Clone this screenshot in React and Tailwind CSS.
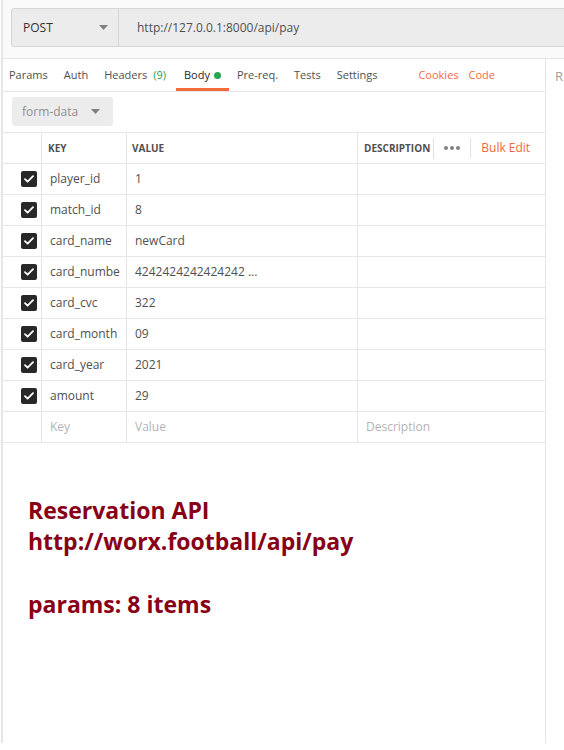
import React from 'react';

const rows = [
  { key: 'player_id', value: '1' },
  { key: 'match_id', value: '8' },
  { key: 'card_name', value: 'newCard' },
  { key: 'card_numbe', value: '4242424242424242 ...' },
  { key: 'card_cvc', value: '322' },
  { key: 'card_month', value: '09' },
  { key: 'card_year', value: '2021' },
  { key: 'amount', value: '29' },
];

const tabs = ['Params', 'Auth', 'Headers', 'Body', 'Pre-req.', 'Tests', 'Settings'];

function Caret({ className = '' }) {
  return (
    <svg width="9" height="5" viewBox="0 0 9 5" className={className}>
      <path d="M0 0h9L4.5 5z" fill="currentColor" />
    </svg>
  );
}

function Check() {
  return (
    <span className="w-4 h-4 rounded-[2px] bg-[#282828] flex items-center justify-center">
      <svg width="10" height="8" viewBox="0 0 10 8">
        <path d="M1 4.2l2.6 2.5L9 1.2" stroke="#fff" strokeWidth="1.8" fill="none" strokeLinecap="round" strokeLinejoin="round" />
      </svg>
    </span>
  );
}

export default function App() {
  return (
    <div className="w-[564px] h-[750px] bg-white overflow-hidden" style={{ fontFamily: '"Open Sans", sans-serif' }}>
      <div className="h-[743px] ml-[1px] border-l-2 border-[#e6e6e6] flex flex-col">
        {/* URL bar */}
        <div className="h-[59px] border-b border-[#e6e6e6] bg-[#fafafa] pt-[8px] pl-[8px] shrink-0">
          <div className="h-[39px] flex bg-[#ececec] border border-[#d6d6d6] rounded-l-[3px] -mr-[10px]">
            <div className="w-[107px] flex items-center justify-between pl-[11px] pr-[10px] border-r border-[#d6d6d6] text-[12px] text-[#333]">
              <span>POST</span>
              <Caret className="text-[#808080]" />
            </div>
            <div className="flex items-center pl-[18px] text-[12px] text-[#505050]">http://127.0.0.1:8000/api/pay</div>
          </div>
        </div>

        <div className="flex flex-1">
          {/* request pane */}
          <div className="w-[543px] border-r border-[#e6e6e6] flex flex-col">
            <div className="h-[33px] border-b border-[#e6e6e6] flex items-stretch -ml-[2px] text-[11px] text-[#505050]">
              {tabs.map((t) => (
                <div
                  key={t}
                  className={`px-2 pt-[3px] flex items-center border-b-[3px] ${t === 'Body' ? 'border-[#f26b3a] text-[#282828]' : 'border-transparent'}`}
                >
                  {t}
                  {t === 'Headers' && <span className="ml-[6px] mr-[2px] text-[#26a552]">(9)</span>}
                  {t === 'Body' && <span className="ml-[4px] w-[7px] h-[7px] rounded-full bg-[#26a552]"></span>}
                </div>
              ))}
              <div className="ml-auto flex items-center gap-[10px] pr-[50px] pt-[3px] text-[#f26b3a] pb-[3px]">
                <span>Cookies</span>
                <span>Code</span>
              </div>
            </div>

            <div className="pt-[5px] pl-[9px] pb-[6px]">
              <div className="w-[101px] h-[29px] bg-[#ececec] rounded-[3px] flex items-center pl-[10px] gap-[13px] text-[12px] text-[#909090]">
                form-data
                <Caret className="text-[#808080]" />
              </div>
            </div>

            <div className="border-t border-[#e6e6e6] text-[12px]">
              <div className="grid grid-cols-[39px_85px_231px_1fr] h-[31px] border-b border-[#e6e6e6]">
                <div className="border-r border-[#e6e6e6]"></div>
                <div className="border-r border-[#e6e6e6] flex items-center pl-[6px] text-[10px] font-bold text-[#505050]">KEY</div>
                <div className="border-r border-[#e6e6e6] flex items-center pl-[5px] text-[10px] font-bold text-[#505050]">VALUE</div>
                <div className="flex items-center pl-[6px] text-[10px] font-bold text-[#505050]">
                  <span className="pr-[3px]">DESCRIPTION</span>
                  <span className="h-[21px] border-l border-[#e0e0e0] flex items-center px-[10px]">
                    <span className="flex gap-[2px]">
                      <span className="w-[4px] h-[4px] rounded-full bg-[#808080]"></span>
                      <span className="w-[4px] h-[4px] rounded-full bg-[#808080]"></span>
                      <span className="w-[4px] h-[4px] rounded-full bg-[#808080]"></span>
                    </span>
                  </span>
                  <span className="h-[20px] border-l border-[#e0e0e0] flex items-center pl-[10px] text-[12px] font-normal text-[#f26b3a]">Bulk Edit</span>
                </div>
              </div>
              {rows.map((r) => (
                <div key={r.key} className="grid grid-cols-[39px_85px_231px_1fr] h-[31px] border-b border-[#e6e6e6] text-[#505050]">
                  <div className="border-r border-[#e6e6e6] flex items-center justify-end pr-[4px]">
                    <Check />
                  </div>
                  <div className="border-r border-[#e6e6e6] flex items-center pl-[8px] overflow-hidden whitespace-nowrap">{r.key}</div>
                  <div className="border-r border-[#e6e6e6] flex items-center pl-[8px]">{r.value}</div>
                  <div></div>
                </div>
              ))}
              <div className="grid grid-cols-[39px_85px_231px_1fr] h-[31px] border-b border-[#e6e6e6] text-[#b3b3b3]">
                <div className="border-r border-[#e6e6e6]"></div>
                <div className="border-r border-[#e6e6e6] flex items-center pl-[8px]">Key</div>
                <div className="border-r border-[#e6e6e6] flex items-center pl-[8px]">Value</div>
                <div className="flex items-center pl-[8px]">Description</div>
              </div>
            </div>

            <div className="pt-[52px] pl-[25px] text-[23px] font-bold text-[#880015] leading-[31px]" style={{ fontFamily: '"Open Sans", sans-serif' }}>
              <div>Reservation API</div>
              <div>http://worx.football/api/pay</div>
              <div className="mt-[32px]">params: 8 items</div>
            </div>
          </div>

          {/* response pane */}
          <div className="flex-1">
            <div className="h-[33px] flex items-center pl-[9px] pt-[3px] text-[13px] text-[#a0a0a0]">R</div>
          </div>
        </div>
      </div>
    </div>
  );
}
